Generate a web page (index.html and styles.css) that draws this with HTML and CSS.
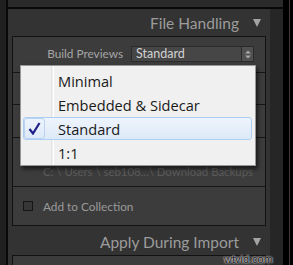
FILE: index.html
```html
<!DOCTYPE html>
<html lang="en">
  <head>
    <meta charset="UTF-8" />
    <meta name="viewport" content="width=device-width, initial-scale=1.0" />
    <title>Import - File Handling</title>
    <link rel="stylesheet" href="styles.css">
  </head>
  <body>
    <div class="frame">
      <div class="side"></div>
      <div class="main">
        <div class="topbar"></div>
        <div class="content">
          <div class="panel">
            <div class="panel-head">
              <span>File Handling</span>
              <span class="tri"></span>
            </div>
            <div class="box">
              <div class="row row-previews">
                <span class="label">Build Previews</span>
                <div class="select">
                  <span class="select-value">Standard</span>
                  <span class="stepper">
                    <svg width="6" height="9" viewBox="0 0 6 9">
                      <path d="M0 3.5 L3 0.5 L6 3.5 Z M0 5.5 L3 8.5 L6 5.5 Z" fill="#a8a8a8" />
                    </svg>
                  </span>
                </div>
              </div>
              <div class="row row-smart"></div>
              <div class="row row-dupes"></div>
              <div class="row row-copy">
                <div class="path">C: \ Users \ seb108...\ Download Backups</div>
              </div>
              <div class="row row-collection">
                <span class="checkbox"></span>
                <span>Add to Collection</span>
              </div>
            </div>
            <div class="panel-head panel-head-2">
              <span>Apply During Import</span>
              <span class="tri"></span>
            </div>
            <div class="box box-open"></div>
          </div>
          <div class="gutter"></div>
        </div>
      </div>
      <div class="edge"></div>
    </div>

    <ul class="menu">
      <li class="item">Minimal</li>
      <li class="item">Embedded &amp; Sidecar</li>
      <li class="item selected">
        <span class="tick">
          <svg width="13" height="13" viewBox="0 0 13 13">
            <path d="M1.5 7 L5 11.5 L11.5 1" fill="none" stroke="#20208a" stroke-width="2.2" />
          </svg>
        </span>
        Standard
      </li>
      <li class="item">1:1</li>
    </ul>

    <div class="watermark">wtvid.com</div>
  </body>
</html>
```

FILE: styles.css
```css
body,
html {
  margin: 0;
  padding: 0;
  background-color: #000;
  font-family: "Lato", "Liberation Sans", sans-serif;
  overflow: hidden;
}
.frame {
  display: flex;
  height: 265px;
}
.side {
  width: 6px;
  background-color: #202020;
  border-right: 2px solid #080808;
}
.main {
  display: flex;
  flex-direction: column;
  width: 275px;
  overflow: hidden;
}
.topbar {
  flex-shrink: 0;
  height: 7px;
  background-color: #2a2a2a;
  border-bottom: 2px solid #080808;
}
.content {
  display: flex;
  flex: 1;
  min-height: 0;
  overflow: hidden;
}
.panel {
  width: 262px;
  background-color: #333333;
}
.gutter {
  flex: 1;
  background-color: #262626;
}
.edge {
  width: 10px;
  background-color: #000;
  position: relative;
}
.edge::after {
  content: "";
  position: absolute;
  left: 6px;
  top: 0;
  bottom: 0;
  width: 1px;
  background-color: #3a3a3a;
}
.panel-head {
  height: 27px;
  display: flex;
  justify-content: flex-end;
  align-items: center;
  padding-right: 9px;
  color: #9c9c9c;
  font-size: 15.5px;
}
.panel-head-2 {
  height: 29px;
  box-sizing: border-box;
  padding-top: 3px;
}
.tri {
  width: 0;
  height: 0;
  margin-left: 14px;
  border-left: 4px solid transparent;
  border-right: 4px solid transparent;
  border-top: 8px solid #a4a4a4;
}
.box {
  margin: 0 4px;
  border: 1px solid #121212;
  background-color: #3c3c3c;
}
.box-open {
  height: 20px;
  border-bottom: none;
}
.row {
  border-top: 1px solid #161616;
}
.row:first-child {
  border-top: none;
}
.row-previews {
  height: 35px;
  display: flex;
  justify-content: flex-end;
  align-items: flex-start;
  padding-top: 9px;
  padding-right: 11px;
  box-sizing: border-box;
  font-size: 11.8px;
}
.label {
  color: #a6a6a6;
  margin-right: 8px;
  line-height: 16px;
}
.select {
  width: 123px;
  height: 16px;
  box-sizing: border-box;
  display: flex;
  background-color: #464646;
  border: 1px solid #2a2a2a;
  font-size: 12.5px;
}
.select-value {
  flex: 1;
  padding-left: 4px;
  color: #d2d2d2;
  line-height: 14px;
}
.stepper {
  width: 11px;
  display: flex;
  align-items: center;
  justify-content: center;
  background-color: #505050;
  border-left: 1px solid #2c2c2c;
}
.row-smart {
  height: 31px;
}
.row-dupes {
  height: 32px;
}
.row-copy {
  height: 49px;
  box-sizing: border-box;
  padding-top: 27px;
  padding-left: 30px;
}
.path {
  color: #5c5c5c;
  font-size: 11.4px;
  line-height: 14px;
  white-space: nowrap;
}
.row-collection {
  height: 38px;
  display: flex;
  align-items: center;
  padding-left: 10px;
  color: #9a9a9a;
  font-size: 11.8px;
}
.checkbox {
  width: 10px;
  height: 10px;
  box-sizing: border-box;
  border: 1px solid #151515;
  background-color: #363636;
  margin-right: 10px;
}
.menu {
  position: absolute;
  left: 20px;
  top: 65px;
  width: 236px;
  height: 101px;
  box-sizing: border-box;
  margin: 0;
  padding: 3px 3px 0 2px;
  list-style: none;
  background-color: #f0f0f0;
  border: 1px solid #979797;
  box-shadow: 2px 3px 4px rgba(0, 0, 0, 0.55);
  font-family: "Open Sans", "Noto Sans", sans-serif;
  font-size: 14.6px;
  color: #1a1a1a;
}
.menu::before {
  content: "";
  position: absolute;
  left: 30px;
  top: 0;
  bottom: 0;
  width: 1px;
  border-left: 1px solid #e2e3e3;
  border-right: 1px solid #ffffff;
}
.item {
  position: relative;
  height: 24px;
  line-height: 23px;
  padding-left: 34px;
  box-sizing: border-box;
  border: 1px solid transparent;
  border-radius: 3px;
}
.selected {
  height: 23px;
  margin-bottom: 1px;
  background: linear-gradient(#eef4fc, #dde9f8);
  border-color: #aecdf3;
}
.tick {
  position: absolute;
  left: 0;
  top: 0;
  width: 21px;
  height: 21px;
  box-sizing: border-box;
  border: 1px solid #b9d3f2;
  border-radius: 3px;
  display: flex;
  align-items: center;
  justify-content: center;
}
.watermark {
  position: absolute;
  left: 224px;
  top: 253px;
  font-family: "Liberation Sans", sans-serif;
  font-size: 11px;
  color: #111;
  text-shadow: 0 0 2px #fff, 0 0 1px #fff;
}
```
